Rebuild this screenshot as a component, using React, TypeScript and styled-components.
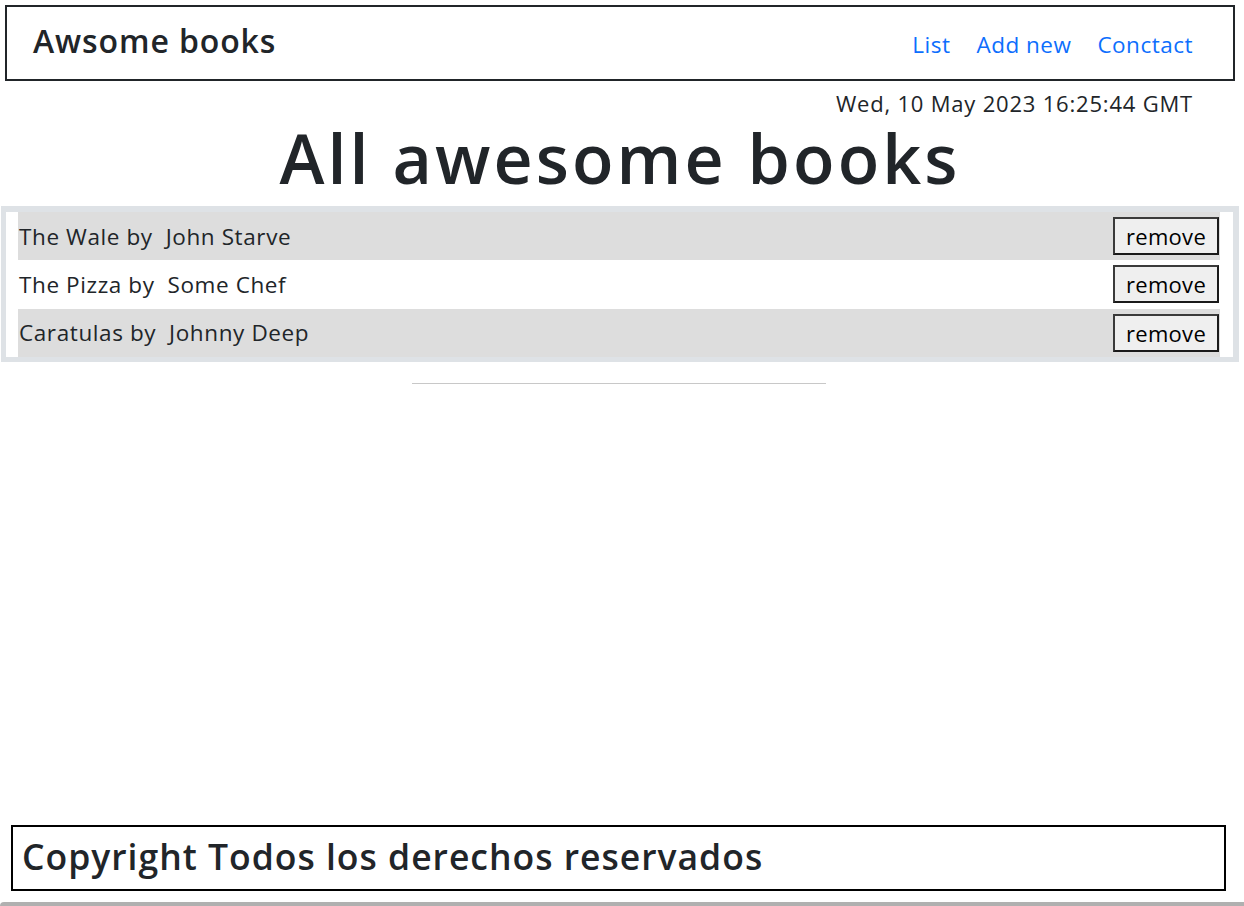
import styled, { createGlobalStyle } from "styled-components";

type Book = { title: string; author: string };

const books: Book[] = [
  { title: "The Wale", author: "John Starve" },
  { title: "The Pizza", author: "Some Chef" },
  { title: "Caratulas", author: "Johnny Deep" },
];

const GlobalStyle = createGlobalStyle`
  html, body { margin: 0; padding: 0; background: #fff; }
  body {
    font-family: "Open Sans", "Noto Sans", sans-serif;
    color: #212529;
  }
`;

export default function App() {
  return (
    <>
      <GlobalStyle />
      <Page>
        <Header>
          <Brand>Awsome books</Brand>
          <Nav>
            <NavLink href="#list">List</NavLink>
            <NavLink href="#add">Add new</NavLink>
            <NavLink href="#contact">Conctact</NavLink>
          </Nav>
        </Header>

        <Main>
          <DateLine>Wed, 10 May 2023 16:25:44 GMT</DateLine>
          <Title>All awesome books</Title>

          <ListFrame>
            <List>
              {books.map((b, i) => (
                <Row key={b.title} striped={i % 2 === 0}>
                  <BookText>
                    {b.title} by {"\u00a0"}{b.author}
                  </BookText>
                  <RemoveButton type="button">remove</RemoveButton>
                </Row>
              ))}
            </List>
          </ListFrame>

          <Divider />
        </Main>

        <Footer>
          <FooterText>Copyright Todos los derechos reservados</FooterText>
        </Footer>
        <BottomBar />
      </Page>
    </>
  );
}

// --- styled components ---
const Page = styled.div`
  display: flex;
  flex-direction: column;
  min-height: 906px;
  box-sizing: border-box;
  padding-top: 5px;
`;

const Header = styled.header`
  display: flex;
  align-items: center;
  justify-content: space-between;
  height: 76px;
  box-sizing: border-box;
  margin: 0 9px 0 5px;
  padding: 0 40px 0 26px;
  border: 2px solid #212529;
`;

const Brand = styled.h1`
  margin: 0 0 6px;
  font-size: 32px;
  font-weight: 600;
  letter-spacing: 0.9px;
  color: #212529;
`;

const Nav = styled.nav`
  display: flex;
  gap: 26px;
  margin-top: 2px;
`;

const NavLink = styled.a`
  color: #0d6efd;
  text-decoration: none;
  font-size: 22.5px;
  letter-spacing: 0.5px;
`;

const Main = styled.main`
  flex: 1;
  display: flex;
  flex-direction: column;
`;

const DateLine = styled.p`
  margin: 9px 51px 0 0;
  text-align: right;
  font-size: 22px;
  letter-spacing: 0.8px;
  line-height: 26px;
`;

const Title = styled.h2`
  margin: 0 0 6px;
  padding-right: 4px;
  text-align: center;
  font-size: 68px;
  font-weight: 600;
  line-height: 84px;
  letter-spacing: 3.1px;
  color: #212529;
`;

const ListFrame = styled.section`
  margin: 0 5px 0 1px;
  padding: 6px 6px 5px 5px;
  background: #dee2e6;
`;

const List = styled.ul`
  list-style: none;
  margin: 0;
  padding: 0 13px 0 12px;
  background: #fff;
`;

const Row = styled.li<{ striped: boolean }>`
  display: flex;
  align-items: center;
  justify-content: space-between;
  height: 48.3px;
  padding-left: 1px;
  background: ${(p) => (p.striped ? "#dddddd" : "#fff")};
`;

const BookText = styled.span`
  font-size: 22.5px;
  letter-spacing: 0.6px;
  white-space: pre;
  color: #212529;
`;

const RemoveButton = styled.button`
  width: 106px;
  height: 38px;
  margin-right: 1px;
  padding: 0;
  border: 2px solid #3a3a3a;
  border-right-color: #1a1a1a;
  border-bottom-color: #1a1a1a;
  background: #efefef;
  color: #000;
  font-family: inherit;
  font-size: 22px;
  letter-spacing: 0.3px;
  cursor: pointer;
`;

const Divider = styled.hr`
  width: 414px;
  margin: 21px 418px 0 412px;
  border: 0;
  border-top: 1px solid #c8c8c8;
`;

const Footer = styled.footer`
  display: flex;
  align-items: center;
  height: 66px;
  box-sizing: border-box;
  margin: 0 18px 0 11px;
  padding: 0 9px;
  border: 2px solid #000;
`;

const FooterText = styled.h3`
  margin: 0 0 4px;
  font-size: 35.5px;
  font-weight: 600;
  letter-spacing: 1px;
  color: #212529;
`;

const BottomBar = styled.div`
  height: 4px;
  margin-top: 11px;
  background: #b0b0b0;
  border-top-left-radius: 4px;
`;
